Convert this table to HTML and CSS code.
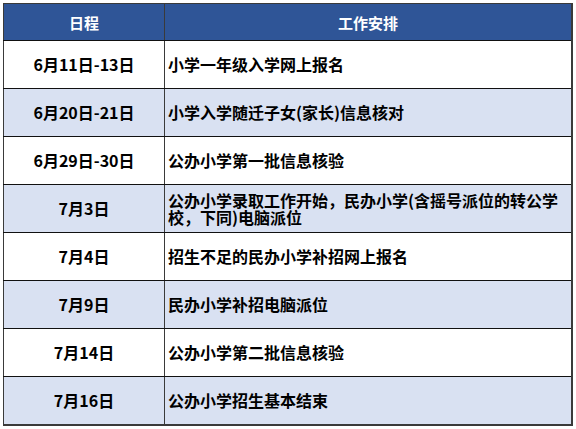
FILE: index.html
```html
<!DOCTYPE html>
<html lang="zh-CN">
<head>
<meta charset="utf-8">
<link rel="stylesheet" href="styles.css">
</head>
<body>
<table class="sched">
  <thead>
    <tr><th class="c-date">日程</th><th class="c-work">工作安排</th></tr>
  </thead>
  <tbody>
    <tr><td class="c-date">6月11日-13日</td><td class="c-work">小学一年级入学网上报名</td></tr>
    <tr class="alt"><td class="c-date">6月20日-21日</td><td class="c-work">小学入学随迁子女(家长)信息核对</td></tr>
    <tr><td class="c-date">6月29日-30日</td><td class="c-work">公办小学第一批信息核验</td></tr>
    <tr class="alt"><td class="c-date">7月3日</td><td class="c-work">公办小学录取工作开始，民办小学(含摇号派位的转公学校，下同)电脑派位</td></tr>
    <tr><td class="c-date">7月4日</td><td class="c-work">招生不足的民办小学补招网上报名</td></tr>
    <tr class="alt"><td class="c-date">7月9日</td><td class="c-work">民办小学补招电脑派位</td></tr>
    <tr><td class="c-date">7月14日</td><td class="c-work">公办小学第二批信息核验</td></tr>
    <tr class="alt"><td class="c-date">7月16日</td><td class="c-work">公办小学招生基本结束</td></tr>
  </tbody>
</table>
</body>
</html>
```

FILE: styles.css
```css
html, body {
  margin: 0;
  padding: 0;
  background: #ffffff;
}
body {
  padding: 3px 0 0 3px;
  font-family: "Noto Sans CJK SC", "Noto Sans", sans-serif;
}
.sched {
  border-collapse: collapse;
  width: 570px;
  table-layout: fixed;
  border-right: 2px solid #3a3a3a;
  border-bottom: 2px solid #3a3a3a;
}
.sched th, .sched td {
  border: 1px solid #3a3a3a;
  padding: 0;
  font-weight: bold;
  line-height: 17px;
}
.sched th {
  background: #2f5597;
  color: #ffffff;
  font-size: 15px;
  height: 36px;
  text-align: center;
  border-bottom-color: #111;
}
.sched td {
  height: 47px;
  font-size: 16px;
  color: #000;
  border-bottom-color: #111;
  border-top-color: #111;
}
.sched th.c-date { width: 160px; }
.sched td.c-date { text-align: center; }
.sched th.c-work { text-align: center; }
.sched td.c-work { text-align: left; padding-left: 3px; padding-right: 2px; }
.sched tr.alt td { background: #d9e1f2; }
```
